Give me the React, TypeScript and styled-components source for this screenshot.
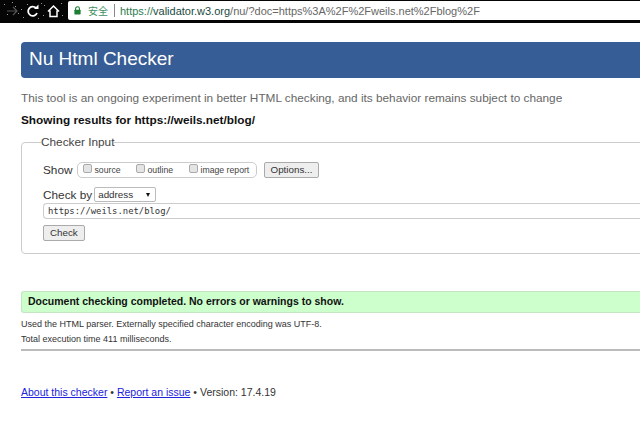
import styled, { createGlobalStyle } from "styled-components";

const GlobalStyle = createGlobalStyle`
  html, body {
    margin: 0;
    padding: 0;
    width: 640px;
    height: 440px;
    overflow: hidden;
    background: #fff;
    font-family: "Liberation Sans", Arial, sans-serif;
    color: #222;
  }
`;

const BrowserBar = styled.div`
  height: 23px;
  background: #050505;
  display: flex;
  align-items: flex-start;
  box-sizing: border-box;
  padding-top: 1px;
`;

const NavIcons = styled.svg`
  width: 68px;
  height: 20px;
  flex: none;
`;

const AddressBar = styled.div`
  flex: 1;
  height: 19px;
  background: #fff;
  border-radius: 2px 0 0 2px;
  display: flex;
  align-items: center;
  padding-left: 6px;
  font-size: 11px;
  white-space: nowrap;
`;

const Secure = styled.span`
  color: #3f8f5f;
  font-family: "Noto Sans CJK SC", sans-serif;
  font-size: 10px;
  margin-left: 7px;
  padding-right: 6px;
  margin-right: 5px;
  border-right: 1px solid #888;
  line-height: 13px;
`;

const Scheme = styled.span`
  color: #2e7d4f;
`;

const Host = styled.span`
  color: #1a4a40;
`;

const Rest = styled.span`
  color: #666;
`;

const Page = styled.main`
  padding: 19px 0 0 21px;
  width: 660px;
  box-sizing: border-box;
`;

const Banner = styled.h1`
  margin: 0;
  height: 36px;
  background: #365d95;
  border-radius: 4px 0 0 4px;
  color: #fff;
  font-size: 19px;
  font-weight: 400;
  line-height: 33px;
  padding-left: 8px;
`;

const Intro = styled.p`
  margin: 13px 0 0;
  font-size: 11.8px;
  line-height: 14px;
  color: #666;
`;

const ResultsFor = styled.h2`
  margin: 8px 0 0;
  font-size: 11.8px;
  line-height: 14px;
  font-weight: 700;
  color: #111;
`;

const InputBox = styled.fieldset`
  margin: 8px 0 0;
  padding: 12px 0 0 21px;
  height: 119px;
  box-sizing: border-box;
  border: 1px solid #ccc;
  border-radius: 4px;
`;

const BoxTitle = styled.legend`
  padding: 0;
  margin-left: -2px;
  font-size: 11.8px;
  line-height: 14px;
  color: #444;
`;

const Row = styled.div`
  display: flex;
  align-items: center;
  font-size: 11.8px;
  color: #333;
`;

const ShowRow = styled(Row)`
  height: 18px;
  gap: 4px;
`;

const CheckByRow = styled(Row)`
  margin-top: 8px;
  height: 15px;
  gap: 2px;
`;

const ShowGroup = styled.div`
  width: 180px;
  height: 16px;
  box-sizing: border-box;
  border: 1px solid #ccc;
  border-radius: 5px;
  display: flex;
  align-items: center;
  padding-left: 5px;
  margin-right: 3px;
`;

const ShowOption = styled.label`
  flex: none;
  width: 53px;
  display: flex;
  align-items: center;
  gap: 3px;
  font-size: 8.7px;
  color: #444;
  white-space: nowrap;
`;

const FakeCheck = styled.span`
  flex: none;
  width: 9px;
  height: 9px;
  box-sizing: border-box;
  border: 1px solid #aaa;
  border-radius: 2px;
  background: #e4e4e4;
  margin-top: -3px;
`;

const Button = styled.button`
  height: 16px;
  padding: 0 6px;
  font-family: inherit;
  font-size: 9.8px;
  color: #333;
  background: #eee;
  border: 1px solid #aaa;
  border-radius: 2px;
  line-height: 12px;
`;

const Select = styled.div`
  width: 62px;
  height: 15px;
  box-sizing: border-box;
  border: 1px solid #bbb;
  border-radius: 2px;
  display: flex;
  align-items: center;
  justify-content: space-between;
  padding: 0 5px 0 3px;
  font-size: 9.8px;
  color: #333;
`;

const Caret = styled.span`
  width: 0;
  height: 0;
  border-left: 2.5px solid transparent;
  border-right: 2.5px solid transparent;
  border-top: 4px solid #111;
`;

const UrlInput = styled.div`
  margin-top: 1px;
  height: 16px;
  box-sizing: border-box;
  border: 1px solid #ccc;
  border-radius: 4px 0 0 4px;
  border-right: 0;
  font-family: "DejaVu Sans Mono", "Liberation Mono", monospace;
  font-size: 8.9px;
  line-height: 14px;
  padding-left: 4px;
  color: #333;
`;

const CheckButton = styled(Button)`
  display: block;
  margin-top: 6px;
`;

const Success = styled.div`
  margin-top: 37px;
  height: 22px;
  box-sizing: border-box;
  background: #ccffcc;
  border: 1px solid #c4e4c4;
  border-right: 0;
  border-radius: 3px 0 0 3px;
  padding-left: 6px;
  font-size: 10.5px;
  font-weight: 700;
  line-height: 19px;
  color: #111;
`;

const Details = styled.div`
  margin-top: 4px;
  padding-bottom: 2px;
  border-bottom: 2px solid #bbb;
  font-size: 9px;
  line-height: 15px;
  color: #333;
`;

const Footer = styled.footer`
  margin-top: 34px;
  font-size: 10.5px;
  line-height: 14px;
  color: #333;
`;

const FooterLink = styled.a`
  color: #2222dd;
  text-decoration: underline;
`;

const specks = [
  [4, 3], [12, 1], [15, 5], [21, 8], [23, 16], [27, 3], [41, 2], [43, 14], [44, 4], [62, 14], [61, 2], [38, 17], [7, 13], [18, 12],
];

export default function App() {
  return (
    <>
      <GlobalStyle />
      <BrowserBar>
        <NavIcons viewBox="0 0 68 20">
          {specks.map(([x, y]) => (
            <rect key={`${x}-${y}`} x={x} y={y} width="1" height="1" fill="#999" />
          ))}
          <path d="M7 10h10M13 6l4 4-4 4" fill="none" stroke="#555" strokeWidth="1.2" />
          <path d="M37 12a4.6 4.6 0 1 1-1-5" fill="none" stroke="#fff" strokeWidth="1.8" />
          <path d="M34 8h4.5V3.5z" fill="#fff" />
          <path d="M48 10.5l5.5-5.5 5.5 5.5M50 9.5V15.5h7V9.5" fill="none" stroke="#fff" strokeWidth="1.5" />
        </NavIcons>
        <AddressBar>
          <svg width="7" height="9" viewBox="0 0 9 11">
            <path d="M2 5V3.2a2.5 2.5 0 0 1 5 0V5" fill="none" stroke="#1e7e34" strokeWidth="1.4" />
            <rect x="0.5" y="4.5" width="8" height="6" rx="0.8" fill="#1e7e34" />
          </svg>
          <Secure>安全</Secure>
          <Scheme>https://</Scheme>
          <Host>validator.w3.org</Host>
          <Rest>/nu/?doc=https%3A%2F%2Fweils.net%2Fblog%2F</Rest>
        </AddressBar>
      </BrowserBar>
      <Page>
        <Banner>Nu Html Checker</Banner>
        <Intro>This tool is an ongoing experiment in better HTML checking, and its behavior remains subject to change</Intro>
        <ResultsFor>Showing results for https://weils.net/blog/</ResultsFor>
        <InputBox>
          <BoxTitle>Checker Input</BoxTitle>
          <ShowRow>
            Show
            <ShowGroup>
              <ShowOption><FakeCheck />source</ShowOption>
              <ShowOption><FakeCheck />outline</ShowOption>
              <ShowOption><FakeCheck />image report</ShowOption>
            </ShowGroup>
            <Button>Options...</Button>
          </ShowRow>
          <CheckByRow>
            Check by
            <Select>address<Caret /></Select>
          </CheckByRow>
          <UrlInput>https://weils.net/blog/</UrlInput>
          <CheckButton>Check</CheckButton>
        </InputBox>
        <Success>Document checking completed. No errors or warnings to show.</Success>
        <Details>
          <div>Used the HTML parser. Externally specified character encoding was UTF-8.</div>
          <div>Total execution time 411 milliseconds.</div>
        </Details>
        <Footer>
          <FooterLink href="#about">About this checker</FooterLink> • <FooterLink href="#issue">Report an issue</FooterLink> • Version: 17.4.19
        </Footer>
      </Page>
    </>
  );
}
